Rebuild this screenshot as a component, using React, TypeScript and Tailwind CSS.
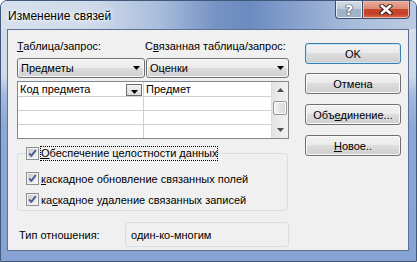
import React from "react";

function CheckBox() {
  return (
    <svg width="13" height="13" viewBox="0 0 13 13" className="shrink-0">
      <defs>
        <linearGradient id="cbg" x1="0" y1="0" x2="1" y2="1">
          <stop offset="0" stopColor="#c9ccd1" />
          <stop offset="1" stopColor="#f7f7f7" />
        </linearGradient>
      </defs>
      <rect x="0.5" y="0.5" width="12" height="12" fill="#f4f4f4" stroke="#8e8f8f" />
      <rect x="2" y="2" width="9" height="9" fill="url(#cbg)" />
      <path d="M3.2 6.4 L5.3 8.9 L9.8 3.2" stroke="#4b5d8f" strokeWidth="1.9" fill="none" strokeLinejoin="round" />
    </svg>
  );
}

function Arrow({ className = "" }: { className?: string }) {
  return (
    <svg width="7" height="4" viewBox="0 0 7 4" className={className}>
      <path d="M0 0 H7 L3.5 4 Z" fill="#000" />
    </svg>
  );
}

function SmallArrow({ up = false }: { up?: boolean }) {
  return (
    <svg width="7" height="4" viewBox="0 0 7 4">
      {up ? <path d="M0 4 H7 L3.5 0 Z" fill="#4d4d4d" /> : <path d="M0 0 H7 L3.5 4 Z" fill="#4d4d4d" />}
    </svg>
  );
}

function Combo({ text, w }: { text: string; w: string }) {
  return (
    <div
      className={`${w} h-[20px] flex items-center justify-between rounded-[3px] border border-[#707070] bg-[linear-gradient(to_bottom,#f2f2f2_0%,#ebebeb_50%,#dddddd_50%,#cfcfcf_100%)] shadow-[inset_0_0_0_1px_#f8f8f8] pl-[3px] pr-[4px]`}
    >
      <span>{text}</span>
      <Arrow />
    </div>
  );
}

function Btn({ children, def = false, className = "" }: { children: React.ReactNode; def?: boolean; className?: string }) {
  return (
    <div
      className={`w-[96px] h-[21px] flex items-center justify-center rounded-[3px] border ${
        def
          ? "border-[#3c7fb1] shadow-[inset_0_0_0_1px_#c6e6f8]"
          : "border-[#707070] shadow-[inset_0_0_0_1px_#fafafa]"
      } bg-[linear-gradient(to_bottom,#f2f2f2_0%,#ebebeb_50%,#dddddd_50%,#cfcfcf_100%)] ${className}`}
    >
      {children}
    </div>
  );
}

export default function App() {
  return (
    <div className="w-[417px] h-[262px] font-['Liberation_Sans',Arial,sans-serif] text-[11px] leading-[14px] text-black">
      <div className="w-[417px] h-[262px] rounded-t-[7px] border border-[#41587a] bg-[linear-gradient(to_bottom,#d5dfec_0px,#cfdaea_75px,#a2b8dd_95px,#8ca8d6_125px,#86a2d2_262px)] flex flex-col overflow-hidden">
        {/* Title bar */}
        <div className="h-[28px] flex items-start bg-[linear-gradient(to_right,#d6e0ed_0%,#cfdaea_22%,#a9bddc_38%,#7592c4_52%,#6b8bc0_60%,#8aa3cf_72%,#a9bddb_85%,#bccbe3_100%)]">
          <div className="pl-[7px] pt-[8px] text-[12px] leading-[15px] [text-shadow:0_0_6px_#ffffff,0_0_3px_#ffffff]">
            Изменение связей
          </div>
          <div className="ml-auto mr-[6px] flex h-[19px] mt-[-1px]">
            <div className="w-[27px] h-[19px] rounded-bl-[4px] border border-[#3b4d68] border-r-0 bg-[linear-gradient(to_bottom,#d3dce8_0%,#bfcbdc_45%,#a3b3c9_50%,#9fb0c8_100%)] shadow-[inset_0_0_0_1px_#e6ecf4] flex items-center justify-center">
              <span className="text-white font-bold text-[14px] leading-[14px] font-['DejaVu_Sans',sans-serif] [text-shadow:0_0_1px_#27364d,0_0_1px_#27364d,0_0_1px_#27364d]">
                ?
              </span>
            </div>
            <div className="w-[48px] h-[19px] rounded-br-[4px] border border-[#3b4d68] bg-[linear-gradient(to_bottom,#e9aa9b_0%,#dc8a76_45%,#c8452d_50%,#c33f27_75%,#d9704f_100%)] shadow-[inset_0_0_0_1px_#f0b9a9] flex items-center justify-center">
              <svg width="14" height="11" viewBox="0 0 14 11">
                <path d="M3 2 L11 9 M11 2 L3 9" stroke="#3a2320" strokeWidth="4.6" strokeLinecap="square" />
                <path d="M3 2 L11 9 M11 2 L3 9" stroke="#ffffff" strokeWidth="2.6" strokeLinecap="square" />
              </svg>
            </div>
          </div>
        </div>

        {/* Client area */}
        <div className="ml-[6px] w-[402px] h-[222px] border border-[#5d7192] bg-[#f0f0f0] flex">
          {/* Left column */}
          <div className="ml-[9px] w-[272px] flex flex-col pt-[9px]">
            <div className="flex h-[14px]">
              <span className="w-[128px]">
                <u>Т</u>аблица/запрос:
              </span>
              <span>
                С<u>в</u>язанная таблица/запрос:
              </span>
            </div>
            <div className="flex mt-[5px]">
              <Combo text="Предметы" w="w-[128px]" />
              <div className="w-[1px]" />
              <Combo text="Оценки" w="w-[143px]" />
            </div>
            {/* Grid */}
            <div className="mt-[3px] w-[272px] h-[58px] border border-[#828790] bg-white flex">
              <div className="w-[253px] flex flex-col">
                <div className="h-[15px] flex border-b border-[#cfcfcf]">
                  <div className="w-[126px] border-r border-[#cfcfcf] flex items-center pl-[2px] pr-[1px]">
                    <span className="flex-1">Код предмета</span>
                    <div className="w-[16px] h-[12px] mt-[1px] border border-[#6d6d6d] bg-[linear-gradient(to_bottom,#f4f4f4,#dcdcdc)] flex items-end justify-center pb-[1px]">
                      <Arrow />
                    </div>
                  </div>
                  <div className="flex-1 flex items-center pl-[2px]">Предмет</div>
                </div>
                <div className="h-[14px] flex border-b border-[#cfcfcf]">
                  <div className="w-[126px] border-r border-[#cfcfcf]" />
                  <div className="flex-1" />
                </div>
                <div className="h-[14px] flex border-b border-[#cfcfcf]">
                  <div className="w-[126px] border-r border-[#cfcfcf]" />
                  <div className="flex-1" />
                </div>
                <div className="h-[13px] flex">
                  <div className="w-[126px] border-r border-[#cfcfcf]" />
                  <div className="flex-1" />
                </div>
              </div>
              <div className="w-[17px] flex flex-col border-l border-[#dcdcdc] bg-[linear-gradient(to_right,#e4e4e4,#f1f1f1)]">
                <div className="h-[16px] flex items-center justify-center">
                  <SmallArrow up />
                </div>
                <div className="mt-[3px] mx-[1px] h-[14px] rounded-[2px] border border-[#979797] bg-[linear-gradient(to_right,#f4f4f4,#e4e4e4_50%,#d6d6d6)] shadow-[inset_0_0_0_1px_#fbfbfb]" />
                <div className="flex-1" />
                <div className="h-[16px] flex items-center justify-center">
                  <SmallArrow />
                </div>
              </div>
            </div>

            {/* Group box */}
            <fieldset className="mt-[7px] w-[271px] rounded-[3px] border border-[#d5dfe5] pl-[8px] pb-0">
              <legend className="px-0">
                <div className="flex items-center">
                  <CheckBox />
                  <span className="ml-[1px] border border-dotted border-black px-0 leading-[13px]">
                    <u>О</u>беспечение целостности данных
                  </span>
                </div>
              </legend>
              <div className="mt-[7px] h-[21px] flex items-center">
                <CheckBox />
                <span className="ml-[2px]">
                  <u>к</u>аскадное обновление связанных полей
                </span>
              </div>
              <div className="h-[21px] flex items-center">
                <CheckBox />
                <span className="ml-[2px]">
                  ка<u>с</u>кадное удаление связанных записей
                </span>
              </div>
            </fieldset>

            {/* Relation type */}
            <div className="mt-[11px] h-[25px] flex items-center">
              <span className="w-[108px] pl-[2px]">Тип отношения:</span>
              <div className="w-[164px] h-[25px] rounded-[3px] border border-[#d5dfe5] flex items-center pl-[5px]">
                один-ко-многим
              </div>
            </div>
          </div>

          {/* Buttons */}
          <div className="ml-[16px] flex flex-col pt-[13px]">
            <Btn def>OK</Btn>
            <Btn className="mt-[9px]">Отмена</Btn>
            <Btn className="mt-[10px]">
              <span>
                Объ<u>е</u>динение...
              </span>
            </Btn>
            <Btn className="mt-[10px]">
              <span>
                <u>Н</u>овое..
              </span>
            </Btn>
          </div>
        </div>
      </div>
    </div>
  );
}
